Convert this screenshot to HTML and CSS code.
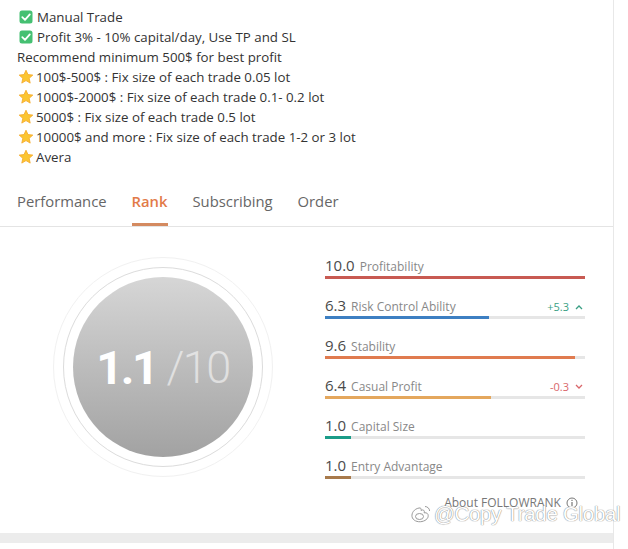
FILE: index.html
```html
<!DOCTYPE html>
<html>
<head>
<meta charset="UTF-8">
<title>Rank</title>
<link rel="stylesheet" href="styles.css">
</head>
<body>
<div class="page">
  <div class="intro">
    <div class="line"><span class="check"><svg viewBox="0 0 14 14" width="14" height="14"><rect x="0.5" y="0.5" width="13" height="13" rx="2.5" fill="#45c072"/><path d="M3.3 7.2 L6 9.8 L10.8 4.4" fill="none" stroke="#fff" stroke-width="1.8" stroke-linecap="round" stroke-linejoin="round"/></svg></span>Manual Trade</div>
    <div class="line"><span class="check"><svg viewBox="0 0 14 14" width="14" height="14"><rect x="0.5" y="0.5" width="13" height="13" rx="2.5" fill="#45c072"/><path d="M3.3 7.2 L6 9.8 L10.8 4.4" fill="none" stroke="#fff" stroke-width="1.8" stroke-linecap="round" stroke-linejoin="round"/></svg></span>Profit 3% - 10% capital/day, Use TP and SL</div>
    <div class="line plain">Recommend minimum 500$ for best profit</div>
    <div class="line"><span class="star"><svg viewBox="0 0 16 16" width="16" height="16"><path d="M8 1.2 L10 5.6 L14.8 6.1 L11.2 9.3 L12.2 14.1 L8 11.6 L3.8 14.1 L4.8 9.3 L1.2 6.1 L6 5.6 Z" fill="#fbc531" stroke="#f5a623" stroke-width="0.8" stroke-linejoin="round"/></svg></span>100$-500$ : Fix size of each trade 0.05 lot</div>
    <div class="line"><span class="star"><svg viewBox="0 0 16 16" width="16" height="16"><path d="M8 1.2 L10 5.6 L14.8 6.1 L11.2 9.3 L12.2 14.1 L8 11.6 L3.8 14.1 L4.8 9.3 L1.2 6.1 L6 5.6 Z" fill="#fbc531" stroke="#f5a623" stroke-width="0.8" stroke-linejoin="round"/></svg></span>1000$-2000$ : Fix size of each trade 0.1- 0.2 lot</div>
    <div class="line"><span class="star"><svg viewBox="0 0 16 16" width="16" height="16"><path d="M8 1.2 L10 5.6 L14.8 6.1 L11.2 9.3 L12.2 14.1 L8 11.6 L3.8 14.1 L4.8 9.3 L1.2 6.1 L6 5.6 Z" fill="#fbc531" stroke="#f5a623" stroke-width="0.8" stroke-linejoin="round"/></svg></span>5000$ : Fix size of each trade 0.5 lot</div>
    <div class="line"><span class="star"><svg viewBox="0 0 16 16" width="16" height="16"><path d="M8 1.2 L10 5.6 L14.8 6.1 L11.2 9.3 L12.2 14.1 L8 11.6 L3.8 14.1 L4.8 9.3 L1.2 6.1 L6 5.6 Z" fill="#fbc531" stroke="#f5a623" stroke-width="0.8" stroke-linejoin="round"/></svg></span>10000$ and more : Fix size of each trade 1-2 or 3 lot</div>
    <div class="line"><span class="star"><svg viewBox="0 0 16 16" width="16" height="16"><path d="M8 1.2 L10 5.6 L14.8 6.1 L11.2 9.3 L12.2 14.1 L8 11.6 L3.8 14.1 L4.8 9.3 L1.2 6.1 L6 5.6 Z" fill="#fbc531" stroke="#f5a623" stroke-width="0.8" stroke-linejoin="round"/></svg></span>Avera</div>
  </div>

  <div class="tabs">
    <span class="tab">Performance</span>
    <span class="tab active">Rank</span>
    <span class="tab">Subscribing</span>
    <span class="tab">Order</span>
  </div>

  <div class="rank">
    <div class="ring-outer">
      <div class="ring-inner">
        <div class="disc"><b>1.1</b><span>/10</span></div>
      </div>
    </div>

    <div class="metrics">
      <div class="metric">
        <div class="head"><span class="num">10.0</span><span class="name">Profitability</span></div>
        <div class="track"><div class="fill c-profit" style="width:100%"></div></div>
      </div>
      <div class="metric">
        <div class="head"><span class="num">6.3</span><span class="name">Risk Control Ability</span>
          <span class="delta up">+5.3 <svg viewBox="0 0 8 6" width="8" height="6"><path d="M1 5 L4 2 L7 5" fill="none" stroke="currentColor" stroke-width="1.3"/></svg></span></div>
        <div class="track"><div class="fill c-risk" style="width:63%"></div></div>
      </div>
      <div class="metric">
        <div class="head"><span class="num">9.6</span><span class="name">Stability</span></div>
        <div class="track"><div class="fill c-stab" style="width:96%"></div></div>
      </div>
      <div class="metric">
        <div class="head"><span class="num">6.4</span><span class="name">Casual Profit</span>
          <span class="delta down">-0.3 <svg viewBox="0 0 8 6" width="8" height="6"><path d="M1 1 L4 4 L7 1" fill="none" stroke="currentColor" stroke-width="1.3"/></svg></span></div>
        <div class="track"><div class="fill c-casual" style="width:64%"></div></div>
      </div>
      <div class="metric">
        <div class="head"><span class="num">1.0</span><span class="name">Capital Size</span></div>
        <div class="track"><div class="fill c-cap" style="width:10%"></div></div>
      </div>
      <div class="metric">
        <div class="head"><span class="num">1.0</span><span class="name">Entry Advantage</span></div>
        <div class="track"><div class="fill c-entry" style="width:10%"></div></div>
      </div>
      <div class="about">About FOLLOWRANK <svg viewBox="0 0 12 12" width="12" height="12"><circle cx="6" cy="6" r="5" fill="none" stroke="#777" stroke-width="1"/><rect x="5.4" y="5" width="1.2" height="4" fill="#777"/><rect x="5.4" y="2.8" width="1.2" height="1.2" fill="#777"/></svg></div>
    </div>
  </div>

  <div class="band"></div>

  <div class="mark"><svg viewBox="0 0 22 20" width="22" height="20"><path d="M9 4 C4 5 1.5 9 2 12.5 C2.6 16.5 7.5 18.5 12 17.5 C16.5 16.5 19 13.5 18 10.5 C17.3 8.6 15 8.6 14.2 8.9 C15 6.2 13 5.3 11 6.4 C11.5 4.6 10.8 3.7 9 4 Z" fill="#fff" stroke="#9a9a9a" stroke-width="1"/><ellipse cx="9.5" cy="12.5" rx="4" ry="3" fill="none" stroke="#9a9a9a" stroke-width="1"/><path d="M15 2.5 C17.5 2.6 19.5 4.4 19.6 7" fill="none" stroke="#9a9a9a" stroke-width="1"/></svg><span>@Copy Trade Global</span></div>
</div>
</body>
</html>
```

FILE: styles.css
```css
body{
 margin: 0;
 background: #fff;
 font-family: "Open Sans", "Noto Sans", sans-serif;
 color: #333;
}
.page{
 position: relative;
 width: 613px;
 height: 549px;
 border-right: 1px solid #e8e8e8;
}

/* description lines */
.intro{
 padding: 7px 0 0 17px;
 font-size: 13.3px;
}
.line{
 height: 20px;
 line-height: 20px;
 display: flex;
 align-items: center;
 white-space: nowrap;
}
.check{
 display: inline-flex;
 margin: 0 4px 0 2px;
}
.star{
 display: inline-flex;
 margin: 0 2px 0 1px;
}

/* tabs */
.tabs{
 display: flex;
 gap: 25px;
 padding: 24px 0 0 17px;
 height: 60px;
 box-sizing: border-box;
 border-bottom: 1px solid #e4e4e4;
}
.tab{
 font-size: 14.8px;
 color: #666;
 line-height: 20px;
 height: 35px;
 box-sizing: border-box;
}
.tab.active{
 color: #e27a48;
 font-weight: 600;
 border-bottom: 3px solid #d48a60;
}

/* rank */
.rank{
 display: flex;
 height: 306px;
}
.ring-outer{
 width: 220px;
 height: 220px;
 margin: 30px 0 0 53px;
 border-radius: 50%;
 border: 1px solid #f1f1f1;
 box-sizing: border-box;
 display: flex;
 align-items: center;
 justify-content: center;
}
.ring-inner{
 width: 200px;
 height: 200px;
 border-radius: 50%;
 border: 1px solid #dcdcdc;
 box-sizing: border-box;
 display: flex;
 align-items: center;
 justify-content: center;
}
.disc{
 width: 180px;
 height: 180px;
 border-radius: 50%;
 background: linear-gradient(#d6d6d6, #a2a2a2);
 display: flex;
 align-items: center;
 justify-content: center;
 font-family: "Roboto", sans-serif;
 color: #fff;
}
.disc b{
 font-size: 47px;
 font-weight: 700;
 letter-spacing: -2.5px;
 margin-right: 10px;
}
.disc span{
 font-size: 45px;
 font-weight: 300;
 opacity: 0.55;
 letter-spacing: -1.5px;
}

.metrics{
 width: 260px;
 margin: 28px 0 0 52px;
}
.metric{
 margin-bottom: 16px;
}
.metric:last-of-type{
 margin-bottom: 0;
}
.head{
 display: flex;
 align-items: baseline;
 height: 20px;
 line-height: 20px;
 margin-bottom: 1px;
}
.num{
 font-size: 15px;
 color: #4a4a4a;
 margin-right: 5px;
}
.name{
 font-size: 12px;
 color: #888;
}
.delta{
 margin-left: auto;
 margin-right: 2px;
 font-size: 11px;
 display: flex;
 align-items: center;
 gap: 6px;
}
.delta.up{
 color: #3a9f84;
}
.delta.down{
 color: #d9666a;
}
.track{
 height: 3px;
 background: #e6e6e6;
}
.fill{
 height: 3px;
}
.c-profit{ background: #c85a52; }
.c-risk{ background: #3d7fc2; }
.c-stab{ background: #e07b4f; }
.c-casual{ background: #e4a75d; }
.c-cap{ background: #1b9c88; }
.c-entry{ background: #a87a4c; }

.about{
 margin-top: 13px;
 padding-right: 7px;
 text-align: right;
 font-size: 12px;
 color: #777;
 line-height: 16px;
}
.about svg{
 vertical-align: -2px;
 margin-left: 2px;
}

.band{
 height: 10px;
 background: #ececec;
}

/* watermark over the corner */
.mark{
 position: absolute;
 left: 410px;
 top: 502px;
 display: flex;
 align-items: center;
 gap: 2px;
 white-space: nowrap;
}
.mark span{
 font-family: "Liberation Sans", sans-serif;
 font-size: 20.5px;
 color: #fff;
 letter-spacing: -0.3px;
 text-shadow: 0 0 1px #888, 0 0 1px #888;
}
```
